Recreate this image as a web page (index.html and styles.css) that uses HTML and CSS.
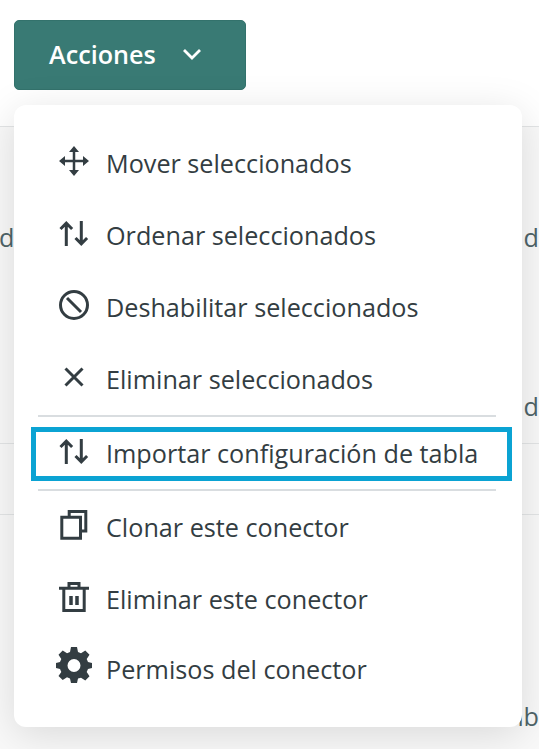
FILE: index.html
```html
<!DOCTYPE html>
<html lang="es">
<head>
    <meta charset="UTF-8">
    <title>Acciones</title>
    <link rel="stylesheet" href="styles.css">
</head>
<body>
    <div class="toolbar">
        <button class="btn">
            <span>Acciones</span>
            <svg class="chevron" viewBox="0 0 20 12"><path d="M2 2l8 8 8-8"/></svg>
        </button>
    </div>
    <div class="table">
        <div class="row row-a"><span>d</span><span>d</span></div>
        <div class="row row-b"><span></span><span>d</span></div>
        <div class="row row-c"></div>
        <div class="row row-d"><span></span><span>nb</span></div>
    </div>

    <div class="menu">
        <a class="item">
            <svg class="icon" viewBox="0 0 30 30"><path class="thin" d="M15 4v22M4 15h22"/><path class="fill" d="M15 0l5 6H10zM15 30l-5-6h10zM0 15l6-5v10zM30 15l-6 5V10z"/></svg>
            Mover seleccionados
        </a>
        <a class="item">
            <svg class="icon" viewBox="0 0 30 30"><path d="M7.300 28V5.200M1.500 11l5.800-5.800L13.100 11M22.300 3v22.800M16.500 20l5.800 5.800L28.100 20"/></svg>
            Ordenar seleccionados
        </a>
        <a class="item">
            <svg class="icon" viewBox="0 0 30 30"><circle cx="15" cy="15" r="13.500"/><path d="M8 8l14 14"/></svg>
            Deshabilitar seleccionados
        </a>
        <a class="item">
            <svg class="icon" viewBox="0 0 30 30"><path d="M6.500 6.500l17 17M23.500 6.500l-17 17"/></svg>
            Eliminar seleccionados
        </a>
        <div class="divider"></div>
        <a class="item current">
            <svg class="icon" viewBox="0 0 30 30"><path d="M7.300 28V5.200M1.500 11l5.800-5.800L13.100 11M22.300 3v22.800M16.500 20l5.800 5.800L28.100 20"/></svg>
            Importar configuración de tabla
        </a>
        <div class="divider"></div>
        <a class="item">
            <svg class="icon" viewBox="0 0 30 30"><path d="M2.800 7.200h18.700v21H2.800zM10.200 7.200V1.500h16.600v19.500h-5.300"/></svg>
            Clonar este conector
        </a>
        <a class="item">
            <svg class="icon" viewBox="0 0 30 30"><path d="M0 6.300h30M10 6.300V1.500h10v4.800M4.800 6.300v22.200h20.400V6.300"/><path class="bar" d="M12 14v9M18 14v9"/></svg>
            Eliminar este conector
        </a>
        <a class="item last">
            <svg class="icon gear" viewBox="0 0 36 36"><path class="fill" fill-rule="evenodd" d="M15 0h6l1 5 3 1.300 4.300-2.800 4.200 4.200-2.800 4.300L32 15l4 1v5l-4 1-1.300 3 2.800 4.300-4.200 4.200-4.300-2.800L22 31.500 21 36h-6l-1-4.500-3-1.200-4.300 2.800-4.200-4.200L5.300 25 4 22l-4-1v-5l4-1 1.300-3-2.800-4.300 4.200-4.200L11 6.300 14 5zM18 12a6.500 6.500 0 1 0 0 13 6.500 6.500 0 0 0 0-13z"/></svg>
            Permisos del conector
        </a>
    </div>
</body>
</html>
```

FILE: styles.css
```css
* {
    margin: 0;
    padding: 0;
    box-sizing: border-box;
}
body {
    width: 539px;
    height: 749px;
    overflow: hidden;
    background-color: #fff;
    font-family: "Open Sans", "Noto Sans", sans-serif;
    color: #333d42;
}
.toolbar {
    height: 127px;
    padding: 20px 14px 0;
    border-bottom: 1px solid #e3e5e6;
}
.btn {
    display: flex;
    align-items: center;
    width: 232px;
    height: 70px;
    padding: 0 0 2px 34px;
    border: 1px solid #33726c;
    border-radius: 5px;
    background-color: #397a74;
    color: #fff;
    font-family: inherit;
    font-size: 25.200px;
    font-weight: 600;
}
.chevron {
    width: 20px;
    height: 12px;
    margin-left: 26px;
    fill: none;
    stroke: #fff;
    stroke-width: 2.800;
}
.table {
    margin-left: -1px;
    background-color: #f9f9f9;
}
.row {
    display: flex;
    justify-content: space-between;
    border-bottom: 1px solid #e3e5e6;
    color: #4f6468;
    font-size: 25.200px;
    line-height: 32px;
    overflow: hidden;
}
.row-a {
    height: 182px;
    padding-top: 94px;
    border-bottom: none;
}
.row-b {
    height: 135px;
    padding-top: 81px;
}
.row-c {
    height: 71px;
}
.row-d {
    height: 234px;
    padding-top: 185px;
    border-bottom: none;
}
.menu {
    position: absolute;
    left: 14px;
    top: 105px;
    width: 508px;
    height: 622px;
    padding-top: 22px;
    border-radius: 12px;
    background-color: #fff;
    box-shadow: 0 8px 40px rgba(0, 0, 0, 0.13);
}
.item {
    display: flex;
    align-items: center;
    gap: 17px;
    height: 72px;
    padding-left: 45px;
    font-size: 25.200px;
    white-space: nowrap;
}
.icon {
    flex: none;
    width: 30px;
    height: 30px;
    margin-bottom: 4px;
    fill: none;
    stroke: #333d42;
    stroke-width: 3;
    overflow: visible;
}
.icon .thin {
    stroke-width: 2.500;
}
.icon .bar {
    stroke-width: 3.500;
}
.icon .fill {
    fill: #333d42;
    stroke: none;
}
.gear {
    width: 36px;
    height: 36px;
    margin: 0 -3px 8px;
}
.divider {
    height: 2px;
    margin: 0 26px 0 24px;
    background-color: #d9dde0;
}
.current {
    height: 54px;
    margin: 10px 10px 8px 17px;
    padding: 0 0 3px 23px;
    border: 5px solid #0ba3d3;
}
.last {
    margin-top: -2px;
}
```
